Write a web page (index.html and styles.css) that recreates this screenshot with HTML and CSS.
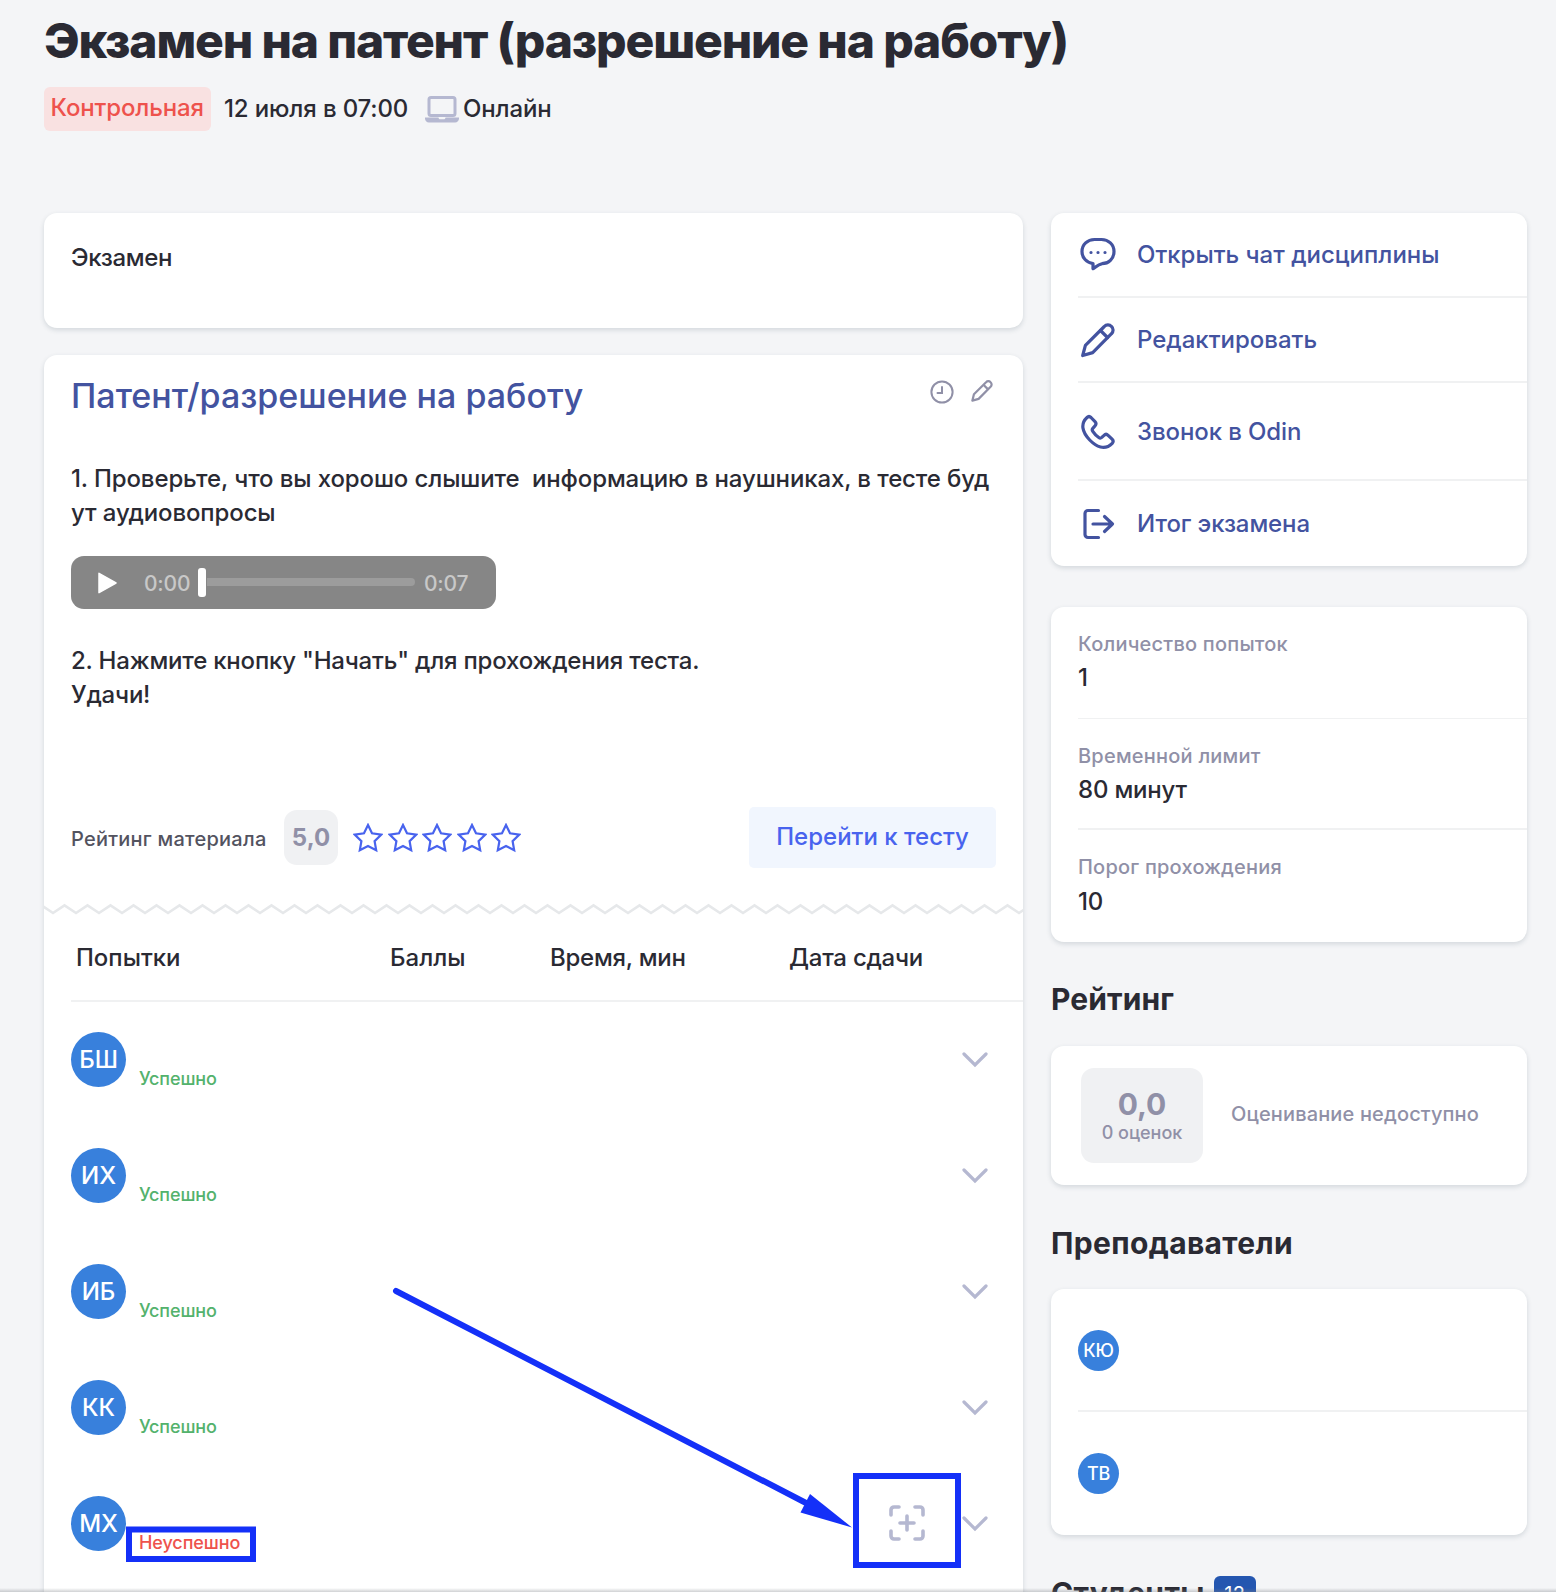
FILE: index.html
```html
<!DOCTYPE html>
<html lang="ru">
<head>
<meta charset="utf-8">
<title>Экзамен на патент</title>
<link rel="stylesheet" href="styles.css">
</head>
<body>
<header class="page-head">
  <h1 class="page-title">Экзамен на патент (разрешение на работу)</h1>
  <div class="meta">
    <span class="badge">Контрольная</span>
    <span class="meta-date">12 июля в 07:00</span>
    <svg class="laptop" width="36" height="28" viewBox="0 0 36 28"><rect x="5" y="2.500" width="26" height="18" rx="2" fill="none" stroke="#b5b8d1" stroke-width="3"/><path fill="#b5b8d1" d="M1 22.500h13.500c.3 1.500 1 1.800 1.800 1.800h3.400c.8 0 1.500-.3 1.800-1.800H35v1c0 2.300-1.600 4-4 4H5c-2.400 0-4-1.700-4-4z"/></svg>
    <span class="meta-place">Онлайн</span>
  </div>
</header>

<div class="layout">
  <main class="main">
    <section class="card intro">Экзамен</section>

    <section class="card test">
      <div class="test-head">
        <h2 class="test-title">Патент/разрешение на работу</h2>
        <div class="test-tools">
          <svg width="24" height="24" viewBox="0 0 24 24" fill="none" stroke="#9090a7" stroke-width="2"><circle cx="12" cy="12" r="10.600"/><path d="M12 7v6H7.500" stroke-linecap="round"/></svg>
          <svg width="22" height="22" viewBox="0 0 24 24" fill="none" stroke="#9090a7" stroke-width="2.400" stroke-linejoin="round"><path d="M1.500 22.500l1.700-7L16.400 2.400a3.450 3.450 0 0 1 5 0 3.450 3.450 0 0 1 0 5L8.300 20.600z"/><path d="M13.600 5.200l5 5"/></svg>
        </div>
      </div>
      <p class="text text-first">1. Проверьте, что вы хорошо слышите&nbsp; информацию в наушниках, в тесте буд<br>ут аудиовопросы</p>
      <div class="player">
        <svg class="play" width="19" height="22" viewBox="0 0 19 22"><path d="M1 1.300L18 11 1 20.700z" fill="#fff" stroke="#fff" stroke-width="1.500" stroke-linejoin="round"/></svg>
        <span class="time">0:00</span>
        <span class="thumb"></span>
        <span class="track"></span>
        <span class="time">0:07</span>
      </div>
      <p class="text text-second">2. Нажмите кнопку "Начать" для прохождения теста.<br>Удачи!</p>
      <div class="rate">
        <span class="rate-label">Рейтинг материала</span>
        <span class="rate-value">5,0</span>
        <div class="stars">
          <svg class="star" viewBox="0 0 30 30"><path d="M15 2l4 8.300 9.300 1.300-6.700 6.500 1.600 9.200-8.200-4.300-8.200 4.300 1.600-9.200-6.700-6.500 9.300-1.300z"/></svg>
          <svg class="star" viewBox="0 0 30 30"><path d="M15 2l4 8.300 9.300 1.300-6.700 6.500 1.600 9.200-8.200-4.300-8.200 4.300 1.600-9.200-6.700-6.500 9.300-1.300z"/></svg>
          <svg class="star" viewBox="0 0 30 30"><path d="M15 2l4 8.300 9.300 1.300-6.700 6.500 1.600 9.200-8.200-4.300-8.200 4.300 1.600-9.200-6.700-6.500 9.300-1.300z"/></svg>
          <svg class="star" viewBox="0 0 30 30"><path d="M15 2l4 8.300 9.300 1.300-6.700 6.500 1.600 9.200-8.200-4.300-8.200 4.300 1.600-9.200-6.700-6.500 9.300-1.300z"/></svg>
          <svg class="star" viewBox="0 0 30 30"><path d="M15 2l4 8.300 9.300 1.300-6.700 6.500 1.600 9.200-8.200-4.300-8.200 4.300 1.600-9.200-6.700-6.500 9.300-1.300z"/></svg>
        </div>
        <button class="go">Перейти к тесту</button>
      </div>
      <svg class="zigzag" width="979" height="16"><defs><pattern id="zig" width="23" height="16" patternUnits="userSpaceOnUse" x="9"><path d="M-1.500 13.100L0 12 11.500 4.300 23 12l1.500 1.100" fill="none" stroke="#e6e8ea" stroke-width="2.600"/></pattern></defs><rect width="979" height="16" fill="url(#zig)"/></svg>
      <div class="cols cols-head">
        <span>Попытки</span><span>Баллы</span><span>Время, мин</span><span>Дата сдачи</span>
      </div>
      <div class="attempts">
        <div class="attempt"><span class="avatar">БШ</span><span class="status ok">Успешно</span><svg class="chevron" viewBox="0 0 26 16"><path d="M2 2l11 11L24 2"/></svg></div>
        <div class="attempt"><span class="avatar">ИХ</span><span class="status ok">Успешно</span><svg class="chevron" viewBox="0 0 26 16"><path d="M2 2l11 11L24 2"/></svg></div>
        <div class="attempt"><span class="avatar">ИБ</span><span class="status ok">Успешно</span><svg class="chevron" viewBox="0 0 26 16"><path d="M2 2l11 11L24 2"/></svg></div>
        <div class="attempt"><span class="avatar">КК</span><span class="status ok">Успешно</span><svg class="chevron" viewBox="0 0 26 16"><path d="M2 2l11 11L24 2"/></svg></div>
        <div class="attempt"><span class="avatar">МХ</span><span class="status fail">Неуспешно</span>
          <svg class="scan" viewBox="0 0 36 36"><path d="M2 10V5a3 3 0 0 1 3-3h5M26 2h5a3 3 0 0 1 3 3v5M34 26v5a3 3 0 0 1-3 3h-5M10 34H5a3 3 0 0 1-3-3v-5M18 11v14M11 18h14"/></svg>
          <svg class="chevron" viewBox="0 0 26 16"><path d="M2 2l11 11L24 2"/></svg></div>
      </div>
    </section>
  </main>

  <aside class="side">
    <nav class="card menu">
      <a class="menu-item r1"><svg class="mi" viewBox="0 0 36 36"><path d="M14.500 2.500h7C28.500 2.500 34 7.500 34 14.600S28.500 26.700 22 26.700c-3 .6-6 3-9 5v-5.200C6.500 25.700 2 20.700 2 14.600 2 7.500 7.500 2.500 14.500 2.500z"/><path d="M11 15.500h.01M18 15.500h.01M25 15.500h.01"/></svg>Открыть чат дисциплины</a>
      <a class="menu-item r2"><svg class="mi" viewBox="0 0 36 36"><path d="M2.700 33.500l2.700-10.200L24.300 4.500a4.900 4.900 0 0 1 7.200 0 4.900 4.900 0 0 1 0 7.200L12.700 30.600z"/><path d="M20.500 8.500l7 7"/></svg>Редактировать</a>
      <a class="menu-item r3"><svg class="mi" viewBox="0 0 36 36"><path d="M7 3.500c1.300-1.300 2.800-1.200 4 0l4 4.200c1.300 1.400 1.200 2.900 0 4.200l-2.200 2.400c-.9 1-.7 2 0 3 1.600 2.500 3.600 4.500 6 6.200 1 .7 2 .8 3-.1l2.200-2.100c1.300-1.300 2.800-1.300 4.100 0l4 3.900c1.300 1.300 1.300 2.800.1 4.100C24.700 37 16 32.500 9.700 26 2 18 .3 9.700 7 3.500z"/></svg>Звонок в Odin</a>
      <a class="menu-item r4"><svg class="mi" viewBox="0 0 36 36"><path d="M18.500 4.500H8a3 3 0 0 0-3 3v21a3 3 0 0 0 3 3h10.500M13 18h19.500M24.500 10.500L32.500 18l-8 7.500"/></svg>Итог экзамена</a>
    </nav>

    <dl class="card facts">
      <div class="fact"><dt>Количество попыток</dt><dd>1</dd></div>
      <div class="fact"><dt>Временной лимит</dt><dd>80 минут</dd></div>
      <div class="fact"><dt>Порог прохождения</dt><dd>10</dd></div>
    </dl>

    <h3 class="side-title t-rating">Рейтинг</h3>
    <section class="card rating">
      <div class="score"><b>0,0</b><small>0 оценок</small></div>
      <span class="rating-note">Оценивание недоступно</span>
    </section>

    <h3 class="side-title t-teachers">Преподаватели</h3>
    <section class="card teachers">
      <div class="teacher"><span class="avatar small">КЮ</span></div>
      <div class="teacher"><span class="avatar small">ТВ</span></div>
    </section>

    <h3 class="side-title t-students">Студенты <span class="count">12</span></h3>
  </aside>
</div>

<svg class="marks" width="1556" height="1592" fill="none" stroke="#1430f8" stroke-width="6">
  <rect x="129" y="1529.500" width="124" height="29.500"/>
  <rect x="856" y="1476" width="102" height="89"/>
  <path d="M396 1291L808 1504" stroke-linecap="round"/>
  <path d="M852 1527.500L810 1494 800.500 1512.500z" fill="#1430f8" stroke="none"/>
</svg>
<div class="edge"></div>
</body>
</html>
```
FILE: styles.css
```css
* { box-sizing: border-box; margin: 0; padding: 0; }
html, body { height: 1592px; overflow: hidden; }
body {
  position: relative;
  width: 1556px;
  background: #f4f5f7;
  color: #2a2a33;
  font: 450 24px/34px Inter, "Noto Sans", sans-serif;
}
.page-head { padding: 12px 0 0 44px; height: 213px; }
.page-title { font-size: 48px; line-height: 58px; font-weight: 820; letter-spacing: -1.16px; white-space: nowrap; }
.meta { display: flex; align-items: center; height: 44px; margin-top: 17px; letter-spacing: -.13px; }
.badge { width: 167px; height: 44px; padding: 4px 6.500px; border-radius: 6px; background: #f9e1e1; color: #ee524c; white-space: nowrap; }
.meta-date { margin-left: 13px; width: 200px; white-space: nowrap; }
.laptop { display: block; margin-right: 3px; }

.layout { display: flex; gap: 28px; padding-left: 44px; }
.main { width: 979px; display: flex; flex-direction: column; gap: 27px; }
.side { width: 476px; }
.card { background: #fff; border-radius: 13px; box-shadow: 0 2px 5px rgba(40, 60, 80, .16); }
.intro { height: 115px; padding: 28px 27px; letter-spacing: -.35px; }
.test { height: 1270px; }
.test-head { display: flex; justify-content: space-between; padding: 18px 30.500px 0 27px; }
.test-title { font-size: 34px; line-height: 46px; font-weight: 450; color: #4353a0; white-space: nowrap; }
.test-tools { display: flex; gap: 17px; padding-top: 7px; }
.text { padding-left: 27px; white-space: nowrap; }
.text-first { margin-top: 43px; letter-spacing: -.12px; }
.player { display: flex; align-items: center; width: 425px; height: 53px; margin: 26px 0 0 27px; padding-left: 27px; border-radius: 13px; background: #868686; }
.play { margin-right: 27px; }
.time { width: 54px; font-size: 21px; line-height: 26px; padding-top: 3px; color: #c8c8c8; font-weight: 500; letter-spacing: -.2px; }
.thumb { width: 8px; height: 29px; border-radius: 3px; background: #fff; }
.track { width: 208px; height: 8px; margin: -1px 9px 0 1px; border-radius: 0 4px 4px 0; background: #9c9c9c; }
.text-second { margin-top: 35px; letter-spacing: -.2px; }
.rate { display: flex; align-items: center; height: 61px; margin: 95px 27px 0; }
.rate-label { width: 213px; font-size: 20px; color: #53535f; white-space: nowrap; padding-top: 3px; letter-spacing: .24px; }
.rate-value { width: 54px; height: 55px; border-radius: 13px; background: #f0f1f3; color: #9090a7; font-weight: 700; line-height: 55px; text-align: center; }
.stars { display: flex; gap: 4.500px; margin-left: 15px; }
.star { width: 30px; height: 30px; fill: none; stroke: #4863ee; stroke-width: 2.200; }
.go { width: 247px; height: 61px; margin-left: auto; padding-bottom: 2px; border: 0; border-radius: 5px; background: #f1f6fe; color: #4863ee; font: inherit; white-space: nowrap; }
.zigzag { display: block; margin-top: 33px; }
.cols { display: grid; grid-template-columns: 314px 160px 239px 1fr; margin-left: 27px; padding-left: 5px; white-space: nowrap; }
.cols span:nth-child(n+3) { letter-spacing: -.25px; }
.cols-head { height: 85px; padding-top: 24px; border-bottom: 2px solid #f0f1f2; }
.attempts { padding-top: 30px; }
.attempt { display: flex; height: 116.120px; padding: 0 35px 0 27px; }
.avatar { display: flex; align-items: center; justify-content: center; width: 55px; height: 55px; border-radius: 50%; background: #3880dc; color: #fff; }
.status { margin: 34px 0 0 13px; font-size: 18px; line-height: 26px; letter-spacing: -.1px; }
.ok { color: #53b26c; }
.fail { color: #ee524c; }
.chevron { width: 26px; height: 16px; margin: 20px 0 0 auto; fill: none; stroke: #b5b8d1; stroke-width: 3.200; stroke-linecap: round; }
.scan { width: 36px; height: 36px; margin: 9px 0 0 auto; fill: none; stroke: #b5b8d1; stroke-width: 3.600; stroke-linecap: round; }
.scan + .chevron { margin-left: 37px; }

.menu-item { display: flex; align-items: center; gap: 21px; margin-left: 27px; color: #4353a0; white-space: nowrap; border-bottom: 2px solid #f0f1f2; }
.r1, .r2 { height: 85px; }
.r3 { height: 98px; padding-top: 1px; letter-spacing: -.1px; }
.r4 { height: 85px; border: 0; letter-spacing: -.1px; }
.mi { width: 36px; height: 36px; margin-left: 2px; fill: none; stroke: #4353a0; stroke-width: 3.200; stroke-linejoin: round; stroke-linecap: round; }
.facts { height: 335px; margin-top: 41px; }
.fact { height: 111.500px; margin-left: 27px; padding-top: 20px; border-bottom: 2px solid #f0f1f2; }
.fact:first-child { border-bottom-width: 1px; }
.fact:last-child { border: 0; }
.fact:last-child dd { padding-top: 1px; }
.fact dt { font-size: 20px; color: #9090a7; letter-spacing: .22px; }
.fact dd { letter-spacing: -.2px; }
.side-title { font-size: 30px; line-height: 40px; font-weight: 700; letter-spacing: .35px; }
.t-rating { margin-top: 37px; letter-spacing: .1px; }
.rating { display: flex; align-items: center; gap: 28px; height: 139px; margin-top: 27px; padding-left: 30px; }
.score { display: flex; flex-direction: column; align-items: center; width: 122px; height: 95px; padding-top: 18px; border-radius: 13px; background: #f0f1f3; color: #9090a7; }
.score b { font-size: 30px; line-height: 36px; }
.score small { font-size: 18px; line-height: 22px; }
.rating-note { font-size: 20px; color: #9090a7; padding-bottom: 4px; letter-spacing: .14px; }
.t-teachers { margin-top: 38px; }
.teachers { height: 246px; margin-top: 26px; }
.teacher { display: flex; align-items: center; height: 121px; margin-left: 27px; padding-top: 2px; }
.teacher + .teacher { height: 125px; padding-top: 0; border-top: 2px solid #f0f1f2; }
.small { width: 41px; height: 41px; font-size: 18px; letter-spacing: -.2px; }
.t-students { display: flex; margin-top: 38px; white-space: nowrap; }
.count { width: 42px; height: 41px; margin: 3px 0 0 9px; border-radius: 6px; background: #2456b0; color: #fff; font-size: 20px; line-height: 36px; font-weight: 400; text-align: center; }

.marks { position: absolute; left: 0; top: 0; }
.edge { position: absolute; left: 0; bottom: 0; width: 100%; height: 4px; background: linear-gradient(rgba(120, 125, 130, 0), rgba(120, 125, 130, .35)); }
```
